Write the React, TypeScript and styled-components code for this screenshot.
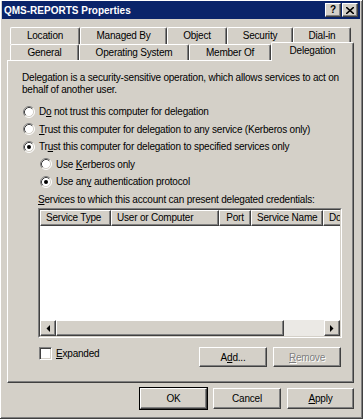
import styled, { createGlobalStyle } from 'styled-components'

const GlobalStyle = createGlobalStyle`
  html, body {
    margin: 0;
    padding: 0;
    background: #d4d0c8;
  }
  body {
    font-family: 'Liberation Sans', Arial, sans-serif;
    font-size: 10px;
    letter-spacing: -0.2px;
    color: #000;
  }
`

const raised = `
  box-sizing: border-box;
  background: #d4d0c8;
  border-top: 1px solid #fff;
  border-left: 1px solid #fff;
  border-right: 1px solid #404040;
  border-bottom: 1px solid #404040;
  box-shadow: inset -1px -1px 0 #808080;
`

const topTabs = [
  { label: 'Location', w: 70 },
  { label: 'Managed By', w: 87 },
  { label: 'Object', w: 60 },
  { label: 'Security', w: 66 },
  { label: 'Dial-in', w: 58 }
]

const bottomTabs = [
  { label: 'General', w: 69 },
  { label: 'Operating System', w: 110 },
  { label: 'Member Of', w: 82 },
  { label: 'Delegation', w: 83, active: true }
]

const columns = [
  { label: 'Service Type', w: 71 },
  { label: 'User or Computer', w: 108 },
  { label: 'Port', w: 32, center: true },
  { label: 'Service Name', w: 72 },
  { label: 'Domain', w: 60 }
]

const RadioIcon = ({ checked }: { checked?: boolean }) => (
  <svg width="12" height="12" viewBox="0 0 12 12">
    <circle cx="6" cy="6" r="5" fill="#fff" />
    <path d="M2.11 9.89 A5.5 5.5 0 0 1 9.89 2.11" fill="none" stroke="#808080" />
    <path d="M9.89 2.11 A5.5 5.5 0 0 1 2.11 9.89" fill="none" stroke="#fff" />
    <path d="M2.82 9.18 A4.5 4.5 0 0 1 9.18 2.82" fill="none" stroke="#404040" />
    <path d="M9.18 2.82 A4.5 4.5 0 0 1 2.82 9.18" fill="none" stroke="#d4d0c8" />
    {checked ? <circle cx="6" cy="6" r="2" fill="#000" /> : null}
  </svg>
)

const Arrow = ({ dir }: { dir: 'left' | 'right' }) => (
  <svg width="4" height="7" viewBox="0 0 4 7">
    {dir === 'left' ? <path d="M4 0 L4 7 L0.5 3.5 Z" fill="#000" /> : <path d="M0 0 L0 7 L3.5 3.5 Z" fill="#000" />}
  </svg>
)

const Radio = ({
  checked,
  indent,
  children
}: {
  checked?: boolean
  indent?: boolean
  children: React.ReactNode
}): React.JSX.Element => (
  <RadioRow $indent={indent}>
    <RadioIcon checked={checked} />
    <span>{children}</span>
  </RadioRow>
)

export default function App(): React.JSX.Element {
  return (
    <>
      <GlobalStyle />
      <Window>
        <TitleBar>
          <Title>QMS-REPORTS Properties</Title>
          <TitleButtons>
            <CaptionButton>
              <HelpGlyph>?</HelpGlyph>
            </CaptionButton>
            <CaptionButton>
              <svg width="8" height="7" viewBox="0 0 8 7">
                <path d="M0 0 L8 7 M8 0 L0 7" stroke="#000" strokeWidth="1.6" />
              </svg>
            </CaptionButton>
          </TitleButtons>
        </TitleBar>

        <Body>
          <TabStrip>
            <TabRow $h={17}>
              {topTabs.map((t) => (
                <Tab key={t.label} $w={t.w}>
                  {t.label}
                </Tab>
              ))}
            </TabRow>
            <TabRow $h={16}>
              {bottomTabs.map((t) => (
                <Tab key={t.label} $w={t.w} $active={t.active}>
                  {t.label}
                </Tab>
              ))}
            </TabRow>
          </TabStrip>

          <Panel>
            <Description>
              Delegation is a security-sensitive operation, which allows services to act on
              <br />
              behalf of another user.
            </Description>

            <RadioGroup>
              <Radio>
                D<u>o</u> not trust this computer for delegation
              </Radio>
              <Radio>
                <u>T</u>rust this computer for delegation to any service (Kerberos only)
              </Radio>
              <Radio checked>
                Tr<u>u</u>st this computer for delegation to specified services only
              </Radio>
              <Radio indent>
                Use <u>K</u>erberos only
              </Radio>
              <Radio indent checked>
                Use an<u>y</u> authentication protocol
              </Radio>
            </RadioGroup>

            <ListLabel>
              <u>S</u>ervices to which this account can present delegated credentials:
            </ListLabel>

            <ListBox>
              <ListInner>
                <HeaderRow>
                  {columns.map((c) => (
                    <HeaderCell key={c.label} $w={c.w} $center={c.center}>
                      {c.label}
                    </HeaderCell>
                  ))}
                </HeaderRow>
                <ListBody />
                <ScrollBar>
                  <ScrollButton>
                    <Arrow dir="left" />
                  </ScrollButton>
                  <Thumb />
                  <Track />
                  <ScrollButton>
                    <Arrow dir="right" />
                  </ScrollButton>
                </ScrollBar>
              </ListInner>
            </ListBox>

            <ActionRow>
              <CheckLabel>
                <CheckBox />
                <span>
                  <u>E</u>xpanded
                </span>
              </CheckLabel>
              <Actions>
                <Button>
                  A<u>d</u>d...
                </Button>
                <Button $disabled>
                  <u>R</u>emove
                </Button>
              </Actions>
            </ActionRow>
          </Panel>

          <DialogButtons>
            <Button $default $w={67} $h={21}>
              OK
            </Button>
            <Button $w={68} $h={21}>
              Cancel
            </Button>
            <Button $w={67} $h={21}>
              <u>A</u>pply
            </Button>
          </DialogButtons>
        </Body>
      </Window>
    </>
  )
}

const Window = styled.div`
  box-sizing: border-box;
  width: 363px;
  height: 419px;
  padding: 1px 2px 2px 2px;
  background: #d4d0c8;
  border-right: 1px solid #404040;
  border-bottom: 1px solid #404040;
  box-shadow:
    inset 1px 1px 0 #fff,
    inset -1px -1px 0 #808080;
  display: flex;
  flex-direction: column;
`

const TitleBar = styled.div`
  height: 18px;
  background: #0a246a;
  display: flex;
  align-items: center;
  justify-content: space-between;
  padding: 0 2px;
`

const Title = styled.span`
  color: #fff;
  font-weight: 700;
  font-size: 10px;
  letter-spacing: 0;
`

const TitleButtons = styled.div`
  display: flex;
  gap: 1px;
`

const CaptionButton = styled.div`
  ${raised}
  width: 16px;
  height: 14px;
  display: flex;
  align-items: center;
  justify-content: center;
`

const HelpGlyph = styled.span`
  font-weight: 700;
  font-size: 10px;
  line-height: 1;
  letter-spacing: 0;
`

const Body = styled.div`
  display: flex;
  flex-direction: column;
  padding: 8px 0 0 5px;
`

const TabStrip = styled.div`
  padding-left: 3px;
`

const TabRow = styled.div<{ $h: number }>`
  display: flex;
  align-items: flex-start;
  height: ${({ $h }) => $h}px;
`

const Tab = styled.div<{ $w: number; $active?: boolean }>`
  box-sizing: border-box;
  flex: none;
  width: ${({ $w }) => $w}px;
  height: ${({ $active }) => ($active ? '19px' : '100%')};
  margin-top: ${({ $active }) => ($active ? '-2px' : '0')};
  position: relative;
  z-index: ${({ $active }) => ($active ? 2 : 0)};
  background: #d4d0c8;
  border-top: 1px solid #fff;
  border-left: 1px solid #fff;
  border-right: 1px solid #404040;
  border-radius: 2px 2px 0 0;
  box-shadow: inset -1px 0 0 #808080;
  display: flex;
  justify-content: center;
  padding-top: ${({ $active }) => ($active ? '2px' : '2px')};
  line-height: 12px;
`

const Panel = styled.div`
  box-sizing: border-box;
  width: 347px;
  height: 323px;
  padding: 11px 12px 0 14px;
  border-top: 1px solid #fff;
  border-left: 1px solid #fff;
  border-right: 1px solid #404040;
  border-bottom: 1px solid #404040;
  box-shadow: inset -1px -1px 0 #808080;
  display: flex;
  flex-direction: column;
`

const Description = styled.p`
  margin: 0;
  line-height: 12px;
  white-space: nowrap;
`

const RadioGroup = styled.div`
  margin-top: 7px;
  display: flex;
  flex-direction: column;
`

const RadioRow = styled.div<{ $indent?: boolean }>`
  height: 17.5px;
  display: flex;
  align-items: center;
  gap: 4px;
  padding-left: ${({ $indent }) => ($indent ? '18px' : '1px')};
  white-space: nowrap;

  svg {
    flex: none;
  }
`

const ListLabel = styled.div`
  margin-top: 3.5px;
  padding-left: 16px;
  line-height: 12px;
  white-space: nowrap;
`

const ListBox = styled.div`
  box-sizing: border-box;
  margin: 2px 0 0 16px;
  width: 304px;
  height: 130px;
  border-top: 1px solid #808080;
  border-left: 1px solid #808080;
  border-right: 1px solid #fff;
  border-bottom: 1px solid #fff;
`

const ListInner = styled.div`
  box-sizing: border-box;
  height: 100%;
  border-top: 1px solid #404040;
  border-left: 1px solid #404040;
  border-right: 1px solid #d4d0c8;
  border-bottom: 1px solid #d4d0c8;
  display: flex;
  flex-direction: column;
  overflow: hidden;
`

const HeaderRow = styled.div`
  display: flex;
  height: 16px;
  flex: none;
  background: #fff;
`

const HeaderCell = styled.div<{ $w: number; $center?: boolean }>`
  ${raised}
  flex: none;
  width: ${({ $w }) => $w}px;
  height: 16px;
  line-height: 14px;
  padding: 0 5px;
  text-align: ${({ $center }) => ($center ? 'center' : 'left')};
  white-space: nowrap;
  overflow: hidden;
`

const ListBody = styled.div`
  flex: 1;
  background: #fff;
`

const ScrollBar = styled.div`
  display: flex;
  height: 16px;
  flex: none;
  background: #fff;
`

const ScrollButton = styled.div`
  ${raised}
  width: 16px;
  height: 16px;
  flex: none;
  display: flex;
  align-items: center;
  justify-content: center;
`

const Thumb = styled.div`
  ${raised}
  width: 228px;
  height: 16px;
  flex: none;
`

const Track = styled.div`
  flex: 1;
  background: #ebe9e5;
`

const ActionRow = styled.div`
  margin-top: 9px;
  padding-left: 17px;
  display: flex;
  align-items: flex-start;
  justify-content: space-between;
`

const CheckLabel = styled.div`
  display: flex;
  align-items: center;
  gap: 4px;
  height: 13px;
  white-space: nowrap;
`

const CheckBox = styled.span`
  box-sizing: border-box;
  width: 13px;
  height: 13px;
  background: #fff;
  border-top: 1px solid #808080;
  border-left: 1px solid #808080;
  border-right: 1px solid #fff;
  border-bottom: 1px solid #fff;
  box-shadow:
    inset 1px 1px 0 #404040,
    inset -1px -1px 0 #d4d0c8;
`

const Actions = styled.div`
  display: flex;
  gap: 6px;
`

const Button = styled.div<{ $default?: boolean; $disabled?: boolean; $w?: number; $h?: number }>`
  ${raised}
  width: ${({ $w }) => $w ?? 68}px;
  height: ${({ $h }) => $h ?? 20}px;
  display: flex;
  align-items: center;
  justify-content: center;
  color: ${({ $disabled }) => ($disabled ? '#808080' : '#000')};
  text-shadow: ${({ $disabled }) => ($disabled ? '1px 1px 0 #fff' : 'none')};
  outline: ${({ $default }) => ($default ? '1px solid #000' : 'none')};
  outline-offset: 0;
  white-space: nowrap;
`

const DialogButtons = styled.div`
  margin-top: 5px;
  padding-right: 6px;
  display: flex;
  justify-content: flex-end;
  gap: 6px;
`
